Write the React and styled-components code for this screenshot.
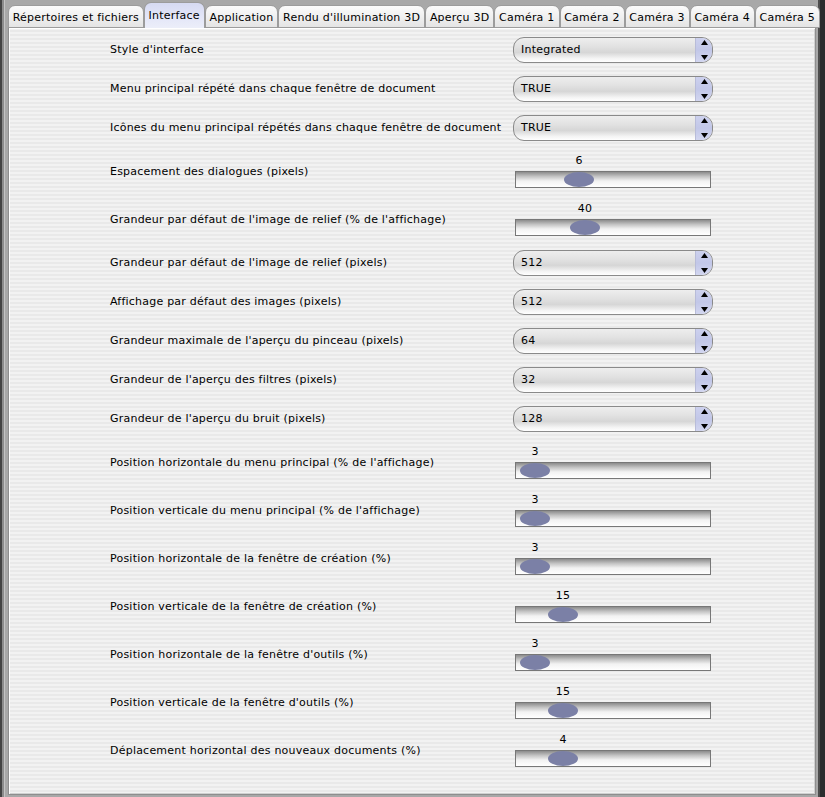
import React from 'react';
import styled, { createGlobalStyle } from 'styled-components';

const GlobalStyle = createGlobalStyle`
  html, body {
    margin: 0;
    padding: 0;
    background: #2a2d2e;
  }
  body {
    font-family: "DejaVu Sans", Verdana, sans-serif;
    font-size: 11px;
    letter-spacing: 0.22px;
    color: #000;
  }
`;

const tabs = [
  'Répertoires et fichiers',
  'Interface',
  'Application',
  "Rendu d'illumination 3D",
  'Aperçu 3D',
  'Caméra 1',
  'Caméra 2',
  'Caméra 3',
  'Caméra 4',
  'Caméra 5',
];

// offset = knob left edge inside the bar, in px
const settings = [
  { type: 'combo', label: "Style d'interface", value: 'Integrated' },
  { type: 'combo', label: 'Menu principal répété dans chaque fenêtre de document', value: 'TRUE' },
  { type: 'combo', label: 'Icônes du menu principal répétés dans chaque fenêtre de document', value: 'TRUE' },
  { type: 'slider', label: 'Espacement des dialogues (pixels)', value: 6, offset: 49 },
  { type: 'slider', label: "Grandeur par défaut de l'image de relief (% de l'affichage)", value: 40, offset: 55 },
  { type: 'combo', label: "Grandeur par défaut de l'image de relief (pixels)", value: '512' },
  { type: 'combo', label: 'Affichage par défaut des images (pixels)', value: '512' },
  { type: 'combo', label: "Grandeur maximale de l'aperçu du pinceau (pixels)", value: '64' },
  { type: 'combo', label: "Grandeur de l'aperçu des filtres (pixels)", value: '32' },
  { type: 'combo', label: "Grandeur de l'aperçu du bruit (pixels)", value: '128' },
  { type: 'slider', label: "Position horizontale du menu principal (% de l'affichage)", value: 3, offset: 5 },
  { type: 'slider', label: "Position verticale du menu principal (% de l'affichage)", value: 3, offset: 5 },
  { type: 'slider', label: 'Position horizontale de la fenêtre de création (%)', value: 3, offset: 5 },
  { type: 'slider', label: 'Position verticale de la fenêtre de création (%)', value: 15, offset: 33 },
  { type: 'slider', label: "Position horizontale de la fenêtre d'outils (%)", value: 3, offset: 5 },
  { type: 'slider', label: "Position verticale de la fenêtre d'outils (%)", value: 15, offset: 33 },
  { type: 'slider', label: 'Déplacement horizontal des nouveaux documents (%)', value: 4, offset: 33 },
];

const Spinner = () => (
  <svg width="9" height="24" viewBox="0 0 9 24">
    <polygon points="4.5,2 8,7 1,7" fill="#000" />
    <polygon points="1,17 8,17 4.5,22" fill="#000" />
  </svg>
);

const App = () => {
  return (
    <>
      <GlobalStyle />
      <Window>
        <TabBar>
          {tabs.map((t) => (
            <Tab key={t} $active={t === 'Interface'}>
              {t}
            </Tab>
          ))}
        </TabBar>
        <Panel>
          {settings.map((s) =>
            s.type === 'combo' ? (
              <ComboRow key={s.label}>
                <Label>{s.label}</Label>
                <Combo>
                  <ComboText>{s.value}</ComboText>
                  <SpinBox>
                    <Spinner />
                  </SpinBox>
                </Combo>
              </ComboRow>
            ) : (
              <SliderRow key={s.label}>
                <Label>{s.label}</Label>
                <Slider>
                  <ValueLine>
                    <Value style={{ left: s.offset + 15 }}>{s.value}</Value>
                  </ValueLine>
                  <Track>
                    <Knob style={{ left: s.offset - 1 }} />
                  </Track>
                </Slider>
              </SliderRow>
            )
          )}
        </Panel>
      </Window>
    </>
  );
};

const Window = styled.div`
  box-sizing: border-box;
  width: 820px;
  height: 797px;
  display: flex;
  flex-direction: column;
  background: #a8a8a8;
  border-left: 2px solid #444;
  border-right: 2px solid #4c4c4c;
  padding: 3px 2px 2px 6px;
  box-shadow: inset 2px 0 0 #8c8c8c, inset 3px 0 0 #c4c4c4;
`;

const TabBar = styled.div`
  display: flex;
  align-items: flex-end;
  height: 25px;
  position: relative;
  z-index: 1;
  margin-bottom: -1px;
`;

const Tab = styled.div`
  box-sizing: border-box;
  height: ${(p) => (p.$active ? '26px' : '23px')};
  padding: 0 4px 0 3.7px;
  display: flex;
  align-items: center;
  padding-top: ${(p) => (p.$active ? '0' : '1px')};
  white-space: nowrap;
  border: 1px solid #9c9c9c;
  border-bottom: ${(p) => (p.$active ? 'none' : '1px solid #9c9c9c')};
  border-radius: 7px 7px 0 0;
  background: ${(p) =>
    p.$active
      ? 'linear-gradient(#d6daf2, #e4e7f8 60%, #eceef9)'
      : 'linear-gradient(#fbfbfb, #f0f0f0 50%, #e4e4e4)'};
`;

const Panel = styled.div`
  box-sizing: border-box;
  flex: 1;
  display: flex;
  flex-direction: column;
  padding: 2px 0 0 101px;
  border: 1px solid #8e8e8e;
  box-shadow: inset 1px 1px 0 #fff, inset -1px -1px 0 #d0d0d0;
  background: repeating-linear-gradient(#f2f2f2 0 2px, #e9e9e9 2px 4px);
`;

const Row = styled.div`
  display: flex;
  align-items: center;
  flex-shrink: 0;
`;

const ComboRow = styled(Row)`
  height: 39px;
`;

const SliderRow = styled(Row)`
  height: 48px;
`;

const Label = styled.div`
  flex: 0 0 403px;
  white-space: nowrap;
  line-height: 13px;
`;

const Combo = styled.div`
  box-sizing: border-box;
  width: 200px;
  height: 26px;
  display: flex;
  align-items: stretch;
  border: 1px solid #8a8a8a;
  border-radius: 11px;
  overflow: hidden;
  background: linear-gradient(#eeeeee 0%, #e2e2e2 35%, #d6d6d6 60%, #f4f4f4 85%, #ffffff 100%);
`;

const ComboText = styled.div`
  flex: 1;
  display: flex;
  align-items: center;
  padding-left: 7px;
  padding-bottom: 1px;
`;

const SpinBox = styled.div`
  width: 16px;
  display: flex;
  align-items: center;
  justify-content: center;
  background: linear-gradient(#cdd1ee, #c2c7e8 50%, #d2d6f0);
  border-left: 1px solid #b8bcd8;
`;

const Slider = styled.div`
  display: flex;
  flex-direction: column;
  margin-left: 2px;
`;

const ValueLine = styled.div`
  position: relative;
  height: 13px;
  margin-bottom: 4px;
`;

const Value = styled.span`
  position: absolute;
  top: 0;
  transform: translateX(-50%);
  line-height: 13px;
`;

const Track = styled.div`
  box-sizing: border-box;
  position: relative;
  width: 196px;
  height: 17px;
  border: 1px solid #777;
  background: linear-gradient(#8c8c8c 0%, #c4c4c4 30%, #f2f2f2 60%, #ffffff 100%);
`;

const Knob = styled.div`
  position: absolute;
  top: 0;
  width: 30px;
  height: 15px;
  border-radius: 50%;
  background: #7b80a6;
`;

export default App;
